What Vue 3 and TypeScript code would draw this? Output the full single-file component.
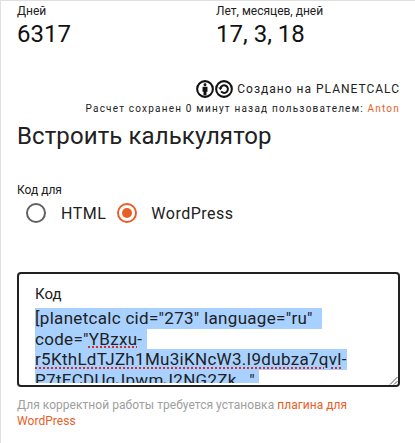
<script setup lang="ts">
const results = [
  { label: 'Дней', value: '6317' },
  { label: 'Лет, месяцев, дней', value: '17, 3, 18' },
]
</script>

<template>
  <div class="card">
    <div class="results">
      <div v-for="r in results" :key="r.label" class="result">
        <div class="label">{{ r.label }}</div>
        <div class="value">{{ r.value }}</div>
      </div>
    </div>
    <div class="credit">
      <svg class="cc" viewBox="0 0 16 16" width="18" height="18">
        <circle cx="8" cy="8" r="7" fill="none" stroke="#111" stroke-width="1.8" />
        <circle cx="8" cy="4.2" r="1.3" fill="#111" />
        <path d="M5.8 6h4.4v4.4H9.3v3.2H6.7v-3.2h-.9z" fill="#111" />
      </svg>
      <svg class="cc" viewBox="0 0 16 16" width="18" height="18">
        <circle cx="8" cy="8" r="7" fill="none" stroke="#111" stroke-width="1.8" />
        <path d="M4.8 7.2A3.4 3.4 0 1 1 5.4 10.2" fill="none" stroke="#111" stroke-width="1.8" />
        <path d="M2.9 6.6h3.8L4.8 9.2z" fill="#111" />
      </svg>
      <span class="credit-text">Создано на PLANETCALC</span>
    </div>
    <div class="saved">Расчет сохранен 0 минут назад пользователем: <a class="link">Anton</a></div>
    <h2 class="title">Встроить калькулятор</h2>
    <div class="group-label">Код для</div>
    <div class="radios">
      <label class="radio">
        <span class="ring"></span>
        <span class="radio-text">HTML</span>
      </label>
      <label class="radio on">
        <span class="ring"><span class="dot"></span></span>
        <span class="radio-text">WordPress</span>
      </label>
    </div>
    <div class="field">
      <div class="field-label">Код</div>
      <div class="code">
        <div><span class="sel">[planetcalc cid="273" language="ru"&nbsp;&nbsp;</span></div>
        <div><span class="sel">code="<span class="err">YBzxu</span>-&nbsp;</span></div>
        <div><span class="sel"><span class="err">r5KthLdTJZh1Mu3iKNcW3.I9dubza7qvl</span>-</span></div>
        <div><span class="sel">P7tECDUqJpwmJ2NG2Zk_ "&nbsp;</span></div>
      </div>
      <svg class="grip" viewBox="0 0 9 9" width="9" height="9">
        <path d="M8.5 1 1 8.5M8.5 5 5 8.5" stroke="#555" stroke-width="1" fill="none" />
      </svg>
    </div>
    <div class="hint">Для корректной работы требуется установка <a class="link">плагина для WordPress</a></div>
  </div>
</template>

<style>
html, body { margin: 0; background: #fff; }
</style>

<style scoped>
.card {
  box-sizing: border-box;
  width: 415px;
  height: 443px;
  overflow: hidden;
  border-left: 1px solid #e0e0e0;
  border-top: 1px solid #e0e0e0;
  padding: 1px 15px 0 16px;
  font-family: Roboto, sans-serif;
  color: #212121;
}
.results { display: flex; }
.result { width: 199px; flex: none; }
.label { font-size: 12px; line-height: 18px; color: #212121; }
.value { font-size: 24px; line-height: 32px; color: #111; margin-top: -2px; }
.credit {
  display: flex;
  justify-content: flex-end;
  align-items: center;
  gap: 1px;
  margin-top: 30px;
  height: 18px;
}
.credit-text { font-size: 12px; letter-spacing: 1px; margin-left: 3px; color: #212121; }
.saved {
  text-align: right;
  font-size: 10px;
  line-height: 16px;
  letter-spacing: 1.2px;
  margin-top: 3px;
  color: #212121;
}
.link { color: #e95e26; }
.title {
  font-size: 24px;
  font-weight: 400;
  line-height: 32px;
  margin: 3px 0 0;
  letter-spacing: 0.1px;
  color: #212121;
}
.group-label { font-size: 12px; line-height: 16px; margin-top: 30px; }
.radios { display: flex; padding-left: 9px; margin-top: 3px; }
.radio { display: flex; align-items: center; height: 24px; font-size: 16px; letter-spacing: 0.5px; }
.ring {
  box-sizing: border-box;
  width: 20px;
  height: 20px;
  border: 2px solid #616161;
  border-radius: 50%;
  display: flex;
  align-items: center;
  justify-content: center;
}
.on .ring { border-color: #e95e26; }
.dot { width: 10px; height: 10px; border-radius: 50%; background: #e95e26; }
.radio-text { margin: 0 0 0 15px; }
.radio + .radio { margin-left: 11px; }
.on .radio-text { margin-left: 14px; }
.field {
  position: relative;
  box-sizing: border-box;
  height: 115px;
  margin-top: 47px;
  border: 2px solid #212121;
  border-radius: 4px;
  padding: 12px 16px 0 16px;
}
.field-label { font-size: 15px; line-height: 16px; color: #212121; }
.code {
  font-size: 17px;
  line-height: 20.5px;
  height: 75px;
  overflow: hidden;
  margin-top: 6px;
  letter-spacing: 0.3px;
  white-space: nowrap;
  color: #212121;
}
.code > div { height: 20.5px; }
.sel { display: inline-block; background: #a8d1ff; }
.err { text-decoration: underline dotted #d32f2f 2px; text-underline-offset: 2px; }
.grip { position: absolute; right: 0; bottom: 0; }
.hint { font-size: 12px; line-height: 16px; color: #9e9e9e; margin-top: 10px; letter-spacing: 0.04px; }
</style>
